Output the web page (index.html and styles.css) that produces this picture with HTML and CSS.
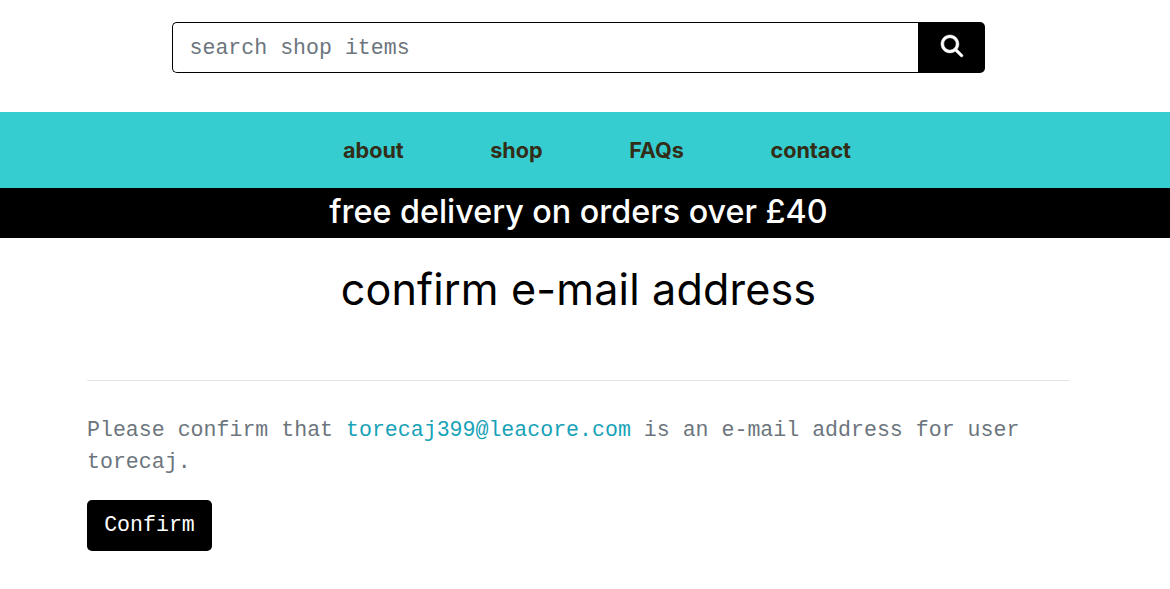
FILE: index.html
```html
<!DOCTYPE html>
<html lang="en">
<head>
<meta charset="utf-8">
<title>Confirm e-mail address</title>
<link rel="stylesheet" href="styles.css">
</head>
<body>
<header class="top">
  <form class="search">
    <input class="search-input" type="text" placeholder="search shop items" aria-label="Search">
    <button class="search-btn" type="button" aria-label="Search"><svg class="search-icon" viewBox="0 0 512 512"><path fill="currentColor" stroke="currentColor" stroke-width="12" d="M416 208c0 45.900-14.900 88.300-40 122.700L502.600 457.400c12.500 12.500 12.500 32.800 0 45.300s-32.800 12.500-45.300 0L330.700 376c-34.400 25.200-76.800 40-122.700 40C93.100 416 0 322.900 0 208S93.100 0 208 0S416 93.100 416 208zM208 352a144 144 0 1 0 0-288 144 144 0 1 0 0 288z"/></svg></button>
  </form>
</header>
<nav class="nav">
  <a class="nav-link">about</a>
  <a class="nav-link">shop</a>
  <a class="nav-link">FAQs</a>
  <a class="nav-link">contact</a>
</nav>
<div class="banner">free delivery on orders over £40</div>
<main class="content">
  <h1 class="title">confirm e-mail address</h1>
  <hr class="rule">
  <p class="message">Please confirm that <a class="email">torecaj399@leacore.com</a> is an e-mail address for user torecaj.</p>
  <button class="confirm" type="button">Confirm</button>
</main>
</body>
</html>
```
FILE: styles.css
```css
* { box-sizing: border-box; }
body { margin: 0; background: #fff; font-family: Inter, sans-serif; color: #000; overflow: hidden; }
.top { height: 112px; padding: 22px 185px 0 172px; }
.search { display: flex; height: 51px; }
.search-input { flex: 1; min-width: 0; border: 1px solid #000; border-right: 0; border-radius: 5px 0 0 5px; padding: 0 16.5px; font: 21.58px "Courier New", "Liberation Mono", monospace; outline: 0; }
.search-input::placeholder { color: #6c757d; opacity: 1; }
.search-btn { width: 67px; border: 0; border-radius: 0 5px 5px 0; background: #000; color: #fff; padding: 0 0 3px 1px; display: flex; align-items: center; justify-content: center; }
.search-icon { width: 22px; height: 22px; overflow: visible; }
.nav { display: flex; justify-content: center; gap: 86.5px; height: 76px; padding-left: 24px; background: #36cdd1; align-items: center; }
.nav-link { font-size: 21.6px; font-weight: 650; color: #332d18; }
.banner { height: 50px; background: #000; color: #fff; font-size: 32.3px; font-weight: 500; line-height: 48px; text-align: center; padding-right: 13px; }
.content { padding: 0 100px 0 87px; }
.title { margin: 0; padding-top: 25px; font-size: 43.1px; font-weight: 420; letter-spacing: .16px; line-height: 53px; text-align: center; }
.rule { margin: 64px 0 33px; border: 0; border-top: 1px solid #e5e5e5; }
.message { margin: 0 0 22px; font: 21.58px/32px "Courier New", "Liberation Mono", monospace; color: #6c757d; }
.email { color: #17a2b8; }
.confirm { height: 51px; width: 125px; padding: 0 0 2px; border: 0; border-radius: 5px; background: #000; color: #fff; font: 21.58px "Courier New", "Liberation Mono", monospace; }
```
